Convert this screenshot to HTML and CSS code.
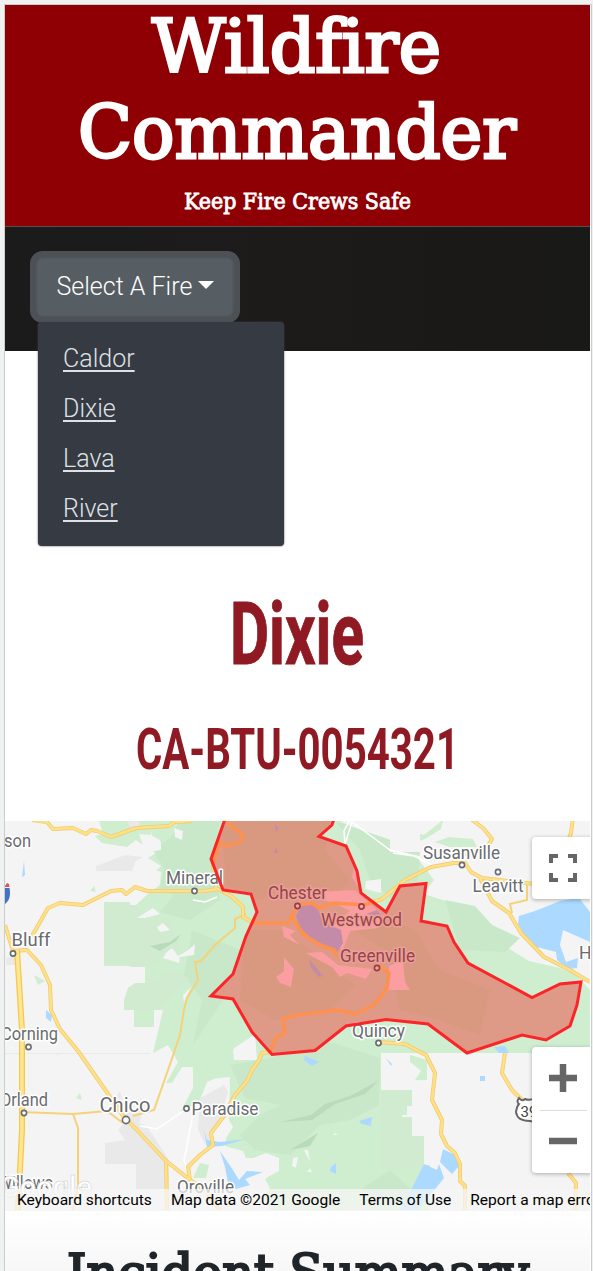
FILE: index.html
```html
<!DOCTYPE html>
<html lang="en">
<head>
<meta charset="utf-8">
<title>Wildfire Commander</title>
<link rel="stylesheet" href="styles.css">
</head>
<body>
<div class="page">
  <header class="banner">
    <svg class="banner-text" viewBox="5 5 585 221" role="heading">
      <text class="brand" x="152" y="71.5" textLength="289" lengthAdjust="spacingAndGlyphs">Wildfire</text>
      <text class="brand" x="78" y="157.500" textLength="438" lengthAdjust="spacingAndGlyphs">Commander</text>
      <text class="tagline" x="184" y="208.700" textLength="227" lengthAdjust="spacingAndGlyphs">Keep Fire Crews Safe</text>
    </svg>
  </header>
  <nav class="toolbar">
    <div class="dropdown">
      <button class="toggle" type="button">Select A Fire<span class="caret"></span></button>
      <div class="menu">
        <a>Caldor</a><a>Dixie</a><a>Lava</a><a>River</a>
      </div>
    </div>
  </nav>
  <main>
    <svg class="incident" viewBox="5 351 585 470">
      <text class="fire-name" x="230" y="663.500" textLength="134" lengthAdjust="spacingAndGlyphs">Dixie</text>
      <text class="fire-id" x="136" y="769" textLength="323" lengthAdjust="spacingAndGlyphs">CA-BTU-0054321</text>
    </svg>
    <section class="map">
      <svg class="tiles" viewBox="5 821 585 389">
        <!-- forest -->
        <g class="forest">
          <path d="M99 821L103 834L95 836L102 843L127 847L136 840L143 845L139 834L151 835L160 840L161 850L148 858L161 866L151 875L160 885L149 893L136 905H130V902H104V966H130V962H134V967H145V983H135V988H128L124 1000V1010H134V1027H154V1010H163L153 1053L168 1045L178 1062L166 1083H172L182 1067H193V1088L180 1113L200 1100L207 1082L216 1078L230 1083L229 1120L233 1127L226 1138L225 1146L243 1151L246 1158L278 1158L278 1170L265 1179L270 1188L264 1196L270 1210H430V1165H424V1136H412V1117H402V1115H407V1106H412V1090H381V1053H590V990L575 974L560 968L529 961L511 950L500 940L486 925L470 916L455 904L424 894L434 880L415 855L393 846L340 821Z"/>
          <path d="M393 843L398 840L409 844L414 837L408 831L424 835L443 820L441 829L427 838L415 843L406 850ZM435 842L449 837L473 839L477 847L450 847ZM410 1055L427 1060V1080L415 1081V1076L421 1071L410 1062ZM34 975L45 981L38 985ZM76 1098L80 1093L82 1100ZM90 891L94 886L96 892Z"/>
          <path d="M200 1163L209 1165L206 1178L193 1178Z"/>
        </g>
        <g class="forest-dark">
          <path d="M180 821H220L211 860L220 900L190 920L160 912L174 895L160 890L164 868L153 850L170 838ZM192 930L240 950L223 1000L193 1045L202 1000L184 975ZM230 1065L270 1058L330 1042L380 1058L379 1105L350 1120L320 1125L290 1155L255 1150L240 1135L260 1115L280 1105L245 1098ZM335 821L420 850L418 880L393 900L370 880L360 850ZM445 900L475 906L492 925L520 938L505 952L460 950ZM390 1170L412 1190L400 1205L360 1190Z"/>
        </g>
        <path class="forest-mid" d="M104 902H130V905H137L145 917L170 922L180 949L145 967H130V962L104 966ZM135 983H150L170 970L190 979L158 1010H124L128 988ZM381 1090H412V1106H402V1117H412V1136H424V1165H420L395 1170H381Z"/>
        <path class="shade" d="M150 946L170 942L181 934L176 941L160 951ZM280 1122L311 1115L325 1104L350 1096L378 1081L365 1094L335 1104L312 1120ZM290 1150L318 1133L310 1146Z"/>
        <!-- clearings -->
        <path class="land" d="M174 828L183 831L182 840L175 837ZM137 918L153 908L160 914L145 918ZM157 927L163 923L170 930L160 932ZM166 953L172 948L178 956L187 951L195 944L194 955L180 957L179 963L163 958ZM183 995L191 987L184 1002ZM366 881L381 879V893L365 889ZM390 830L395 827H420V852H390ZM233 1049L255 1034L257 1060H234ZM208 1082L220 1078L230 1077L229 1090L215 1097L207 1090ZM248 1160L266 1153L279 1158V1171L260 1181L246 1165ZM293 1158L298 1157L296 1168L292 1166ZM304 1150L308 1150L310 1162ZM335 1133L338 1135H333ZM307 1172L312 1172L310 1168ZM139 848L146 842L152 832L151 840L161 842V850L148 852ZM150 868L161 872L160 884L150 886Z"/>
        <path class="land" d="M381 1053H410V1062L421 1071L415 1080L427 1081V1060H590V1210H430V1165H424V1136H412V1117H402V1115H407V1106H412V1090H381Z"/>
        <!-- towns -->
        <path class="urban" d="M96 866L125 855L143 857L135 862L132 871H96ZM105 1143L125 1140L118 1130L130 1117L148 1128L169 1160V1189H136V1164H105ZM200 1098L224 1085L228 1092L218 1125L206 1146L198 1130ZM111 1104L120 1091L124 1106L142 1111L140 1122L130 1120ZM127 821H139V828L131 829ZM6 958L19 955V965H6Z"/>
        <!-- water -->
        <path class="water" d="M518 924L519 916L535 911L560 901L572 899L580 899L590 912V942L563 930L560 945L566 962L578 958L577 968L569 969L557 960L556 952L533 946L525 936ZM305 1056L319 1062L312 1066L304 1060ZM359 1121L372 1117L371 1126L362 1124ZM331 1167L336 1163V1174L330 1171ZM480 1076H485V1081H480ZM443 1149L455 1155L459 1166L452 1174L440 1162ZM424 1164L437 1170L439 1164L444 1178L436 1188L418 1210H400L412 1188ZM220 1151L233 1170L239 1180L247 1171L263 1172L245 1179L250 1185L236 1189L228 1183L225 1167ZM46 1010L52 1015L51 1022L46 1018ZM24 861L25 875L22 877ZM55 1053L61 1058L57 1055ZM386 1058L392 1064L391 1066ZM494 1047L505 1046L509 1053H499ZM204 1130L207 1140L220 1142L246 1139L222 1146L207 1147Z"/>
        <!-- minor roads -->
        <path class="trail" d="M345 844L352 822L390 850L420 857M193 900L205 902L217 897M350 820L344 831L345 845M140 1126L157 1129L185 1110L195 1105L190 1130L184 1160L187 1170M393 853L414 856L432 865"/>
        <path class="gridline" d="M5 1053.500H150"/>
        <g class="minor">
          <path d="M184 1010L180 1035L168 1070L154 1110L133 1116M200 961L195 962L198 980L187 998L184 1010M200 962L215 945L235 928V919L246 914"/>
          <path d="M20 1112L73 1114L107 1111L123 1123M73 1114L78 1128V1186L73 1210M512 913L510 904L527 900V885"/>
        </g>
        <!-- highways -->
        <g class="casing">
          <path id="roads-west" d="M32 820L47 822L53 829L73 828L86 834L91 830L97 831L111 837L136 828L169 826L174 822L192 821M32 936L48 908L60 903L83 905L111 891L122 890L126 894L135 887L147 891H205L218 889L231 896L243 907V917L253 923H288L298 905L312 903L319 908L334 903L364 905L382 899L405 880L431 867L454 863L465 863L471 872L482 878L534 884"/>
          <path id="roads-east" d="M472 820L483 828L492 839L488 846L466 856M574 810L571 833L553 880M480 878L492 901L509 913L521 933L544 957L570 970L590 982M378 1042L405 1044L420 1052L426 1055L435 1073L432 1100L442 1120L441 1134L447 1146L455 1153L460 1164V1181L465 1186V1210M505 1053L502 1073L512 1090L525 1103M568 1173L576 1183L575 1210"/>
          <path id="roads-south" d="M5 925L13 951L27 950L41 965L50 985L51 1010L60 1029L78 1051L106 1091L123 1116L137 1130L165 1160L190 1180L205 1190L220 1210M166 1160L167 1210M190 1180L188 1167L200 1155L213 1145L211 1133L224 1116L235 1095L247 1081L252 1070L259 1060L262 1053L270 1052L276 1038L285 1033L283 1019L296 1015L315 1013L337 1010L355 1014L374 1005L387 988L389 973L377 965M291 916L304 935L320 945L334 950L337 957"/>
          <path id="roads-north" d="M213 860L217 843L229 846L241 841L243 835L229 824L224 810M216 888L213 865L220 840"/>
        </g>
        <g class="highway">
          <use href="#roads-west"/><use href="#roads-east"/><use href="#roads-south"/><use href="#roads-north"/>
        </g>
        <path class="freeway-casing" d="M17 950L22 1030V1130L20 1170L18 1210"/><path class="freeway" d="M17 950L22 1030V1130L20 1170L18 1210"/>
        <!-- fire perimeter -->
        <clipPath id="burn"><path d="M225 819L211 859L223 890L251 894L257 912L246 936L233 974L211 996L233 999L252 1032L272 1054.500L315 1050.500L346 1026L386 1019.500L428 1024L467 1053L522 1035L546 1040L570 1026L577 1005L581 982L560 984L532 997.500L468 963L454 942L447 926L421 921L426 883.500L400 886L386 912L361 893L357 871L346 846L319 836.500L332 825L334 819Z"/></clipPath>
        <path class="fire" d="M225 819L211 859L223 890L251 894L257 912L246 936L233 974L211 996L233 999L252 1032L272 1054.500L315 1050.500L346 1026L386 1019.500L428 1024L467 1053L522 1035L546 1040L570 1026L577 1005L581 982L560 984L532 997.500L468 963L454 942L447 926L421 921L426 883.500L400 886L386 912L361 893L357 871L346 846L319 836.500L332 825L334 819Z"/>
        <g clip-path="url(#burn)">
          <path class="burn-dark" d="M222 821H330L325 850L350 880L340 891L300 890L255 900L226 885ZM245 930L285 930L310 950L355 985L330 1010L275 1020L240 1000ZM345 925L386 918L415 930L440 970L490 990L480 1035L440 1020L400 1010L385 950Z"/>
          <path class="burn-town" d="M306 897L319 892L355 890L386 918L378 928L350 931L343 950L320 935L350 911L332 902ZM284 957L294 969L291 987L280 983L276 977L284 971ZM306 953L322 952L338 965L372 969L366 979L347 973L340 977L332 967ZM389 966L403 960L405 982L410 990L388 990ZM354 865L362 873L361 890L352 878ZM282 926L296 931L290 935L300 945L284 937Z"/>
          <path class="burn-water" d="M302 905L315 904L324 923L341 930L343 943L337 952L316 942L301 929L296 916ZM309 959L323 976L319 977L311 968ZM366 914L377 910L384 918ZM275 825L279 828L276 832ZM276 847L278 853H274Z"/>
          <g class="burn-road"><use href="#roads-west"/><use href="#roads-south"/><use href="#roads-north"/></g>
        </g>
        <!-- places -->
        <g class="dot">
          <circle cx="13" cy="953.500" r="2.600"/><circle cx="194.500" cy="891" r="2.600"/><circle cx="28.500" cy="1047" r="2.600"/><circle cx="24" cy="1113" r="2.600"/><circle cx="126" cy="1120" r="3.600"/><circle cx="186.500" cy="1108.500" r="2.600"/><circle cx="378.500" cy="1043" r="2.600"/><circle cx="462" cy="865" r="2.600"/><circle cx="498" cy="872" r="2.600"/>
        </g>
        <g class="dot dot-burn"><circle cx="297.500" cy="906" r="2.600"/><circle cx="361.500" cy="906.500" r="2.600"/><circle cx="377" cy="968" r="2.600"/></g>
        <g class="place">
          <text x="4" y="846.500" textLength="27" lengthAdjust="spacingAndGlyphs">son</text>
          <text x="11.500" y="946" class="town" textLength="39" lengthAdjust="spacingAndGlyphs">Bluff</text>
          <text x="166" y="884" textLength="57" lengthAdjust="spacingAndGlyphs">Mineral</text>
          <text x="423" y="858.500" textLength="77" lengthAdjust="spacingAndGlyphs">Susanville</text>
          <text x="472.500" y="892" textLength="51" lengthAdjust="spacingAndGlyphs">Leavitt</text>
          <text x="579" y="959">Herlong</text>
          <text x="352" y="1036.500" textLength="53" lengthAdjust="spacingAndGlyphs">Quincy</text>
          <text x="1" y="1040" textLength="57" lengthAdjust="spacingAndGlyphs">Corning</text>
          <text x="0" y="1106" textLength="48" lengthAdjust="spacingAndGlyphs">Orland</text>
          <text x="99.500" y="1112" class="city" textLength="51" lengthAdjust="spacingAndGlyphs">Chico</text>
          <text x="191.500" y="1115" textLength="67" lengthAdjust="spacingAndGlyphs">Paradise</text>
          <text x="-2" y="1189" textLength="55" lengthAdjust="spacingAndGlyphs">Willows</text>
          <text x="177" y="1192.500" textLength="57" lengthAdjust="spacingAndGlyphs">Oroville</text>
        </g>
        <g class="place place-burn">
          <text x="268" y="899" textLength="59" lengthAdjust="spacingAndGlyphs">Chester</text>
          <text x="321" y="926" textLength="81" lengthAdjust="spacingAndGlyphs">Westwood</text>
          <text x="340" y="961.500" textLength="75" lengthAdjust="spacingAndGlyphs">Greenville</text>
        </g>
        <path class="perimeter" d="M225 819L211 859L223 890L251 894L257 912L246 936L233 974L211 996L233 999L252 1032L272 1054.500L315 1050.500L346 1026L386 1019.500L428 1024L467 1053L522 1035L546 1040L570 1026L577 1005L581 982L560 984L532 997.500L468 963L454 942L447 926L421 921L426 883.500L400 886L386 912L361 893L357 871L346 846L319 836.500L332 825L334 819Z"/>
        <!-- route shields -->
        <path class="interstate" d="M5 888H9.500C11 896 9 901 5 904Z"/><path class="interstate-top" d="M5 886L7 883L9 884L9.500 887H5Z"/>
        <path class="shield" d="M519 1098Q522 1102 525 1099Q530 1101 535 1098L545 1101V1119Q536 1123 530 1121Q517 1121 516 1112Q517 1106 519 1104Q516 1102 519 1098Z"/>
        <text class="route" x="520.500" y="1116.500">395</text>
        <text class="logo" x="0" y="1197" textLength="92" lengthAdjust="spacingAndGlyphs">Google</text>
      </svg>
      <div class="controls">
        <button class="control expand" type="button" aria-label="Fullscreen">
          <svg viewBox="0 0 28 28"><path d="M2 9V2H9M19 2H26V9M26 19V26H19M9 26H2V19"/></svg>
        </button>
        <div class="control zoom">
          <button type="button" aria-label="Zoom in"><svg viewBox="0 0 28 28"><path class="glyph" d="M14 0V28M0 14H28"/></svg></button>
          <button type="button" aria-label="Zoom out"><svg viewBox="0 0 28 28"><path class="glyph" d="M0 14H28"/></svg></button>
        </div>
      </div>
      <footer class="legal"><span>Keyboard shortcuts</span><span>Map data ©2021 Google</span><span>Terms of Use</span><span>Report a map error</span></footer>
    </section>
    <section class="summary">
      <svg class="summary-text" viewBox="5 1210 585 61"><text class="summary-title" x="67" y="1288.500" textLength="462" lengthAdjust="spacingAndGlyphs">Incident Summary</text></svg>
    </section>
  </main>
</div>
</body>
</html>
```
FILE: styles.css
```css
* { box-sizing: border-box; }
body { margin: 0; height: 1271px; overflow: hidden; padding: 4px 1px 0 4px; background: #f0f2f2; font-family: Roboto, sans-serif; }
.page { width: 588px; height: 1267px; overflow: hidden; background: #fff; border: 1px solid #c9cdcd; border-bottom: 0; padding-right: 1px; }
svg { display: block; }
.banner { height: 221px; background: #8e0003; }
.banner-text { width: 585px; height: 221px; fill: #fff; font-family: "DejaVu Serif Condensed", "DejaVu Serif", serif; font-variant-ligatures: none; }
.brand { font-size: 72.500px; stroke: #fff; stroke-width: 2.800px; }
.tagline { font-size: 22.500px; stroke: #fff; stroke-width: .8px; }
.toolbar { height: 125px; padding: 32px 33px; border-top: 1px solid #55504f; background: linear-gradient(90deg, #1b1b1b, #1d1a1a 50%, #191917); }
.dropdown { position: relative; width: 195px; }
.toggle { display: flex; align-items: center; width: 194px; height: 56px; padding: 0 0 1px 18.500px; border: 0; border-radius: 5px; background: #565d63; box-shadow: 0 0 0 1.500px #525a60, 0 0 0 8px #4d5156; color: #fff; font: 300 25px Roboto, sans-serif; white-space: nowrap; }
.caret { margin: -4px 0 0 6px; border: 8px solid transparent; border-top-color: #fff; border-bottom: 0; }
.menu { position: absolute; z-index: 2; top: 63px; left: 0; width: 246px; height: 224px; padding: 12px 25px; display: flex; flex-direction: column; border-radius: 4px; background: #363a42; box-shadow: 0 0 2px #444; }
.menu a { height: 50px; line-height: 50px; color: #dee2e6; font-size: 25px; font-weight: 300; text-decoration: underline; text-decoration-thickness: 1.500px; text-underline-offset: 3px; }
.incident { width: 585px; height: 470px; fill: #8f1a23; font-family: Roboto, sans-serif; }
.fire-name { font-size: 87px; font-weight: 700; stroke: #8f1a23; stroke-width: 1px; }
.fire-id { font-size: 58px; font-weight: 700; }
.map { position: relative; width: 585px; height: 390px; overflow: hidden; background: #f4f4f4; }
.tiles { width: 585px; height: 389px; }
.forest { fill: #ceeecf; }
.forest-dark { fill: #c8e8c9; }
.forest-mid { fill: #d1ebd1; }
.shade { fill: #b9dabb; }
.land { fill: #f4f4f4; }
.urban { fill: #e9e9e9; }
.water { fill: #acd9ff; }
.trail { fill: none; stroke: #fff; stroke-width: 1.500px; }
.gridline { stroke: #e9e9e9; }
.minor { fill: none; stroke: #f5d27a; stroke-width: 2px; }
.casing, .highway { fill: none; stroke-linejoin: round; }
.casing { stroke: #f0cb68; stroke-width: 4px; }
.highway { stroke: #ffe08a; stroke-width: 2.500px; }
.freeway-casing { fill: none; stroke: #f3c853; stroke-width: 6px; }
.freeway { fill: none; stroke: #ffe58f; stroke-width: 3.500px; }
.fire { fill: #df9987; }
.burn-dark { fill: #d99980; }
.burn-town { fill: #fa9ea1; }
.burn-water { fill: #c48ba8; }
.burn-road { fill: none; stroke: #ff914f; stroke-width: 3.500px; stroke-linejoin: round; }
.perimeter { fill: none; stroke: #fb2428; stroke-width: 3px; }
.dot { fill: #fff; stroke: #696b6d; stroke-width: 1.600px; }
.dot-burn { fill: #f3a1a0; stroke: #963e45; }
.place { fill: #696b6e; font-size: 17.500px; paint-order: stroke; stroke: #fff; stroke-width: 3px; stroke-linejoin: round; }
.town { font-size: 19px; }
.city { font-size: 20.500px; }
.place-burn { fill: #974449; stroke: #eba09a; }
.interstate { fill: #4271c5; }
.interstate-top { fill: #dc5360; }
.shield { fill: #fff; stroke: #666; stroke-width: 2px; }
.route { fill: #444; font-size: 15px; }
.logo { fill: #fff; stroke: #ccc; stroke-width: .5px; font-size: 29px; font-weight: 500; }
.controls { position: absolute; top: 16px; right: 0; width: 58px; height: 336px; display: flex; flex-direction: column; justify-content: space-between; }
.control { width: 62px; background: #fff; border: 0; border-radius: 4px; box-shadow: 0 1px 4px rgba(0,0,0,.3); }
.expand { height: 62px; padding: 0 17px; }
.expand svg { width: 28px; height: 28px; fill: none; stroke: #666; stroke-width: 4px; }
.zoom { height: 126px; padding: 0 8px; }
.zoom button { display: grid; place-items: center; width: 47px; height: 63px; padding: 0; border: 0; background: none; }
.zoom button + button { border-top: 1px solid #ddd; }
.zoom svg { width: 28px; height: 28px; margin: -2px 0 0 -1px; }
.glyph { fill: none; stroke: #666; stroke-width: 6.500px; }
.legal { position: absolute; left: 0; right: 0; bottom: 0; height: 22px; display: flex; gap: 19px; padding-left: 12px; overflow: hidden; background: rgba(245,245,245,.75); color: #000; font-size: 15.550px; line-height: 22px; white-space: nowrap; }
.legal span { flex: none; }
.summary { height: 60px; background: linear-gradient(#fff, #f7f7f8); }
.summary-text { width: 585px; height: 61px; }
.summary-title { fill: #20252a; stroke: #20252a; stroke-width: 2.200px; font: 50px "DejaVu Serif Condensed", "DejaVu Serif", serif; }
```
